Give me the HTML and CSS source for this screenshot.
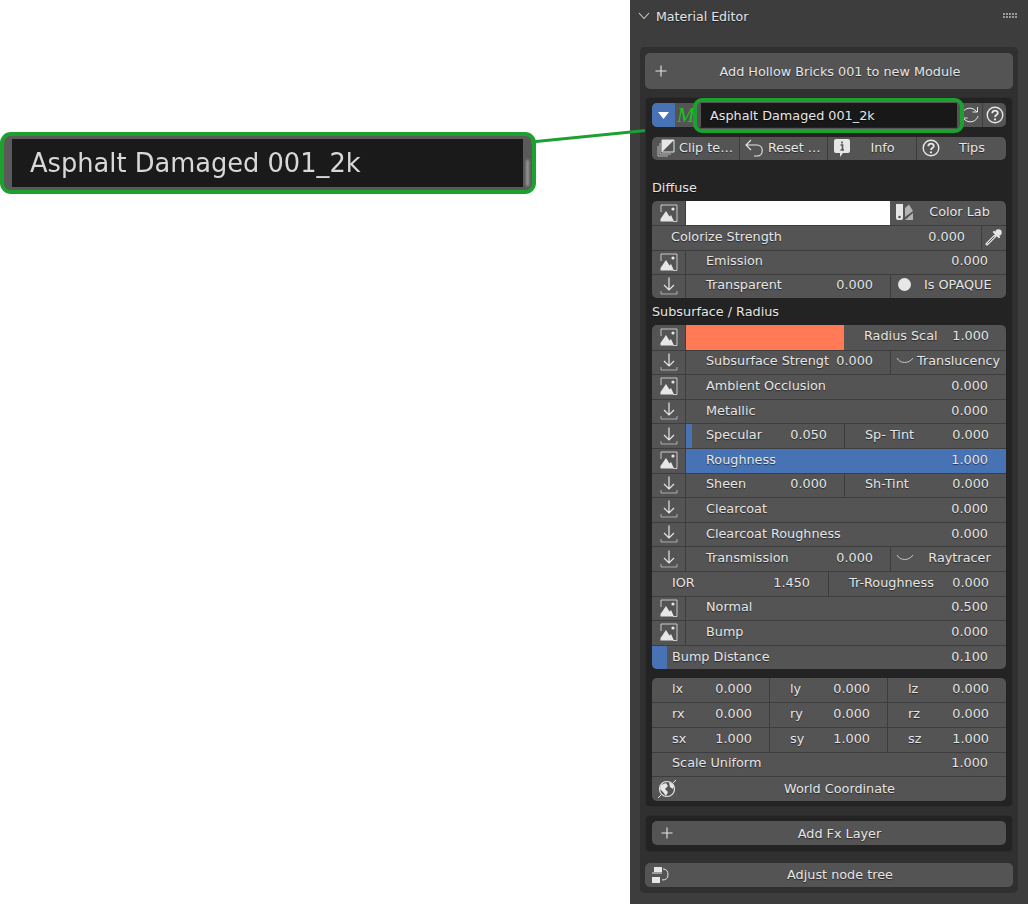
FILE: index.html
```html
<!DOCTYPE html>
<html>
<head>
<meta charset="utf-8">
<title>Material Editor</title>
<link rel="stylesheet" href="styles.css">
</head>
<body>

<svg class="defs" width="0" height="0">
	<symbol id="i-image" viewBox="0 0 18 18">
		<path d="M1 8V1H17V17.500H13" fill="none" stroke="currentColor" stroke-opacity=".8" stroke-width="1"/>
		<path d="M.5 17.500V15L6 7L9.500 12.500L11 11L14 17.500Z" fill="currentColor"/>
		<circle cx="13" cy="5" r="1.600" fill="currentColor"/>
	</symbol>
	<symbol id="i-down" viewBox="0 0 18 18">
		<path d="M9 .5V12.500M4 8L9 13L14 8" fill="none" stroke="currentColor" stroke-width="1.200"/>
		<path d="M1 14V17H17V14" fill="none" stroke="currentColor" stroke-opacity=".6" stroke-width="1"/>
	</symbol>
	<symbol id="i-plus" viewBox="0 0 12 12">
		<path d="M6 .5V11.500M.5 6H11.500" stroke="currentColor" stroke-width="1.100"/>
	</symbol>
	<symbol id="i-help" viewBox="0 0 18 18">
		<circle cx="9" cy="9" r="7.800" fill="none" stroke="currentColor" stroke-width="1.400"/>
		<path d="M6.300 7.200C6.300 3.800 11.800 3.800 11.800 7C11.800 9 9 9 9 11" fill="none" stroke="currentColor" stroke-width="1.800"/>
		<circle cx="9" cy="13.400" r="1.100" fill="currentColor"/>
	</symbol>
	<symbol id="i-arc" viewBox="0 0 18 8">
		<path d="M1 1C4 7 13 7 17 1" fill="none" stroke="currentColor" stroke-opacity=".75" stroke-width="1"/>
	</symbol>
</svg>

<div class="callout">
	<div class="callout-field">Asphalt Damaged 001_2k</div>
	<span class="callout-bit"></span>
</div>

<svg class="callout-line" width="170" height="30" viewBox="0 0 170 30">
	<path d="M0 24L170 7" stroke="#1ca02f" stroke-width="3"/>
</svg>

<aside class="panel">

	<header class="panel-head">
		<svg class="chevron" width="12" height="8" viewBox="0 0 12 8"><path d="M1 1L6 6.500L11 1" fill="none" stroke="currentColor" stroke-width="1.100"/></svg>
		<span>Material Editor</span>
		<span class="grip"></span>
	</header>

	<div class="panel-body">

		<button class="btn btn-add">
			<svg class="btn-icon" width="12" height="12"><use href="#i-plus"/></svg>
			<span>Add Hollow Bricks 001 to new Module</span>
		</button>

		<section class="box box-main">

			<div class="name-row">
				<span class="toggle"><svg width="11" height="7" viewBox="0 0 11 7"><path d="M0 0H11L5.500 7Z" fill="#fff"/></svg></span>
				<span class="script-m">M</span>
				<span class="name-field">Asphalt Damaged 001_2k</span>
				<span class="name-icon">
					<svg width="18" height="18" viewBox="0 0 18 18"><path d="M1 8C2 3 9 0 14 4L16 6M16.500 1V6H11.500M17 10C16 15 9 18 4 14L2 12M1.500 17V12H6.500" fill="none" stroke="currentColor" stroke-width="1"/></svg>
				</span>
				<span class="name-icon help"><svg width="18" height="18"><use href="#i-help"/></svg></span>
			</div>
			<div class="name-mark"></div>

			<div class="tools">
				<span class="tool t1">
					<svg width="18" height="18" viewBox="0 0 18 18"><path d="M5 1H17V13H5Z" fill="none" stroke="currentColor"/><path d="M5 13V1H17Z" fill="currentColor"/><path d="M3 4V15H14M1 7V17H11" fill="none" stroke="currentColor" stroke-opacity=".7"/></svg>
					<span>Clip te…</span>
				</span>
				<span class="tool t2">
					<svg width="19" height="18" viewBox="0 0 19 18"><path d="M6 1L1 6L6 11M1 6H12C19 6 19 17 12 17H9" fill="none" stroke="currentColor" stroke-width="1.100"/></svg>
					<span>Reset …</span>
				</span>
				<span class="tool tool-wide t3">
					<svg width="18" height="20" viewBox="0 0 18 20"><path d="M3 1H15Q17 1 17 3V13Q17 15 15 15H10L7 19V15H3Q1 15 1 13V3Q1 1 3 1Z" fill="currentColor"/><path d="M9 3.500V5.500M7.500 7H9.500V12M7.500 12H11" stroke="#545454" stroke-width="1.600" fill="none"/></svg>
					<span>Info</span>
				</span>
				<span class="tool tool-wide t4">
					<svg width="18" height="18"><use href="#i-help"/></svg>
					<span>Tips</span>
				</span>
			</div>

			<h4 class="sub-head first">Diffuse</h4>
			<div class="group group-short">
				<div class="row">
					<span class="ic"><svg width="18" height="18"><use href="#i-image"/></svg></span>
					<span class="swatch swatch-white"></span>
					<span class="cell cell-lab">
						<svg width="18" height="18" viewBox="0 0 18 18"><path d="M1 1H8V15Q8 17 6 17H3Q1 17 1 15Z" fill="currentColor"/><path d="M10 5L14 1.500L18 8L10 14Z M10 17L18 10V17Z" fill="currentColor" opacity=".65"/><circle cx="4.500" cy="14" r="1.300" fill="#545454"/></svg>
						<span>Color Lab</span>
					</span>
				</div>
				<div class="row">
					<span class="cell cell-full">
						<span>Colorize Strength</span><span>0.000</span>
					</span>
					<span class="ic ic-right">
						<svg width="18" height="18" viewBox="0 0 18 18"><path d="M2 16L10 8" stroke="currentColor" stroke-width="3" stroke-linecap="round"/><path d="M2.500 15.500L9.500 8.500" stroke="#545454" stroke-width="1"/><path d="M9 4L14 9" stroke="currentColor" stroke-width="2.200" stroke-linecap="round"/><circle cx="13.500" cy="4.500" r="3.200" fill="currentColor"/></svg>
					</span>
				</div>
				<div class="row">
					<span class="ic"><svg width="18" height="18"><use href="#i-image"/></svg></span>
					<span class="cell"><span>Emission</span><span>0.000</span></span>
				</div>
				<div class="row">
					<span class="ic"><svg width="18" height="18"><use href="#i-down"/></svg></span>
					<span class="cell w-204"><span>Transparent</span><span>0.000</span></span>
					<span class="cell cell-check">
						<svg width="13" height="13" viewBox="0 0 12 12"><circle cx="6" cy="6" r="6" fill="#e6e6e6"/></svg>
						<span>Is OPAQUE</span>
					</span>
				</div>
			</div>

			<h4 class="sub-head">Subsurface / Radius</h4>
			<div class="group">
				<div class="row">
					<span class="ic"><svg width="18" height="18"><use href="#i-image"/></svg></span>
					<span class="swatch swatch-coral"></span>
					<span class="cell w-162"><span>Radius Scal</span><span>1.000</span></span>
				</div>
				<div class="row">
					<span class="ic"><svg width="18" height="18"><use href="#i-down"/></svg></span>
					<span class="cell w-204"><span>Subsurface Strengt</span><span>0.000</span></span>
					<span class="cell cell-check arc">
						<svg width="18" height="8"><use href="#i-arc"/></svg>
						<span>Translucency</span>
					</span>
				</div>
				<div class="row">
					<span class="ic"><svg width="18" height="18"><use href="#i-image"/></svg></span>
					<span class="cell"><span>Ambient Occlusion</span><span>0.000</span></span>
				</div>
				<div class="row">
					<span class="ic"><svg width="18" height="18"><use href="#i-down"/></svg></span>
					<span class="cell"><span>Metallic</span><span>0.000</span></span>
				</div>
				<div class="row">
					<span class="ic"><svg width="18" height="18"><use href="#i-down"/></svg></span>
					<span class="cell fill w-158" style="--fill: 6px"><span>Specular</span><span>0.050</span></span>
					<span class="cell w-162"><span>Sp- Tint</span><span>0.000</span></span>
				</div>
				<div class="row">
					<span class="ic"><svg width="18" height="18"><use href="#i-image"/></svg></span>
					<span class="cell fill" style="--fill: 100%"><span>Roughness</span><span>1.000</span></span>
				</div>
				<div class="row">
					<span class="ic"><svg width="18" height="18"><use href="#i-down"/></svg></span>
					<span class="cell w-158"><span>Sheen</span><span>0.000</span></span>
					<span class="cell w-162"><span>Sh-Tint</span><span>0.000</span></span>
				</div>
				<div class="row">
					<span class="ic"><svg width="18" height="18"><use href="#i-down"/></svg></span>
					<span class="cell"><span>Clearcoat</span><span>0.000</span></span>
				</div>
				<div class="row">
					<span class="ic"><svg width="18" height="18"><use href="#i-down"/></svg></span>
					<span class="cell"><span>Clearcoat Roughness</span><span>0.000</span></span>
				</div>
				<div class="row">
					<span class="ic"><svg width="18" height="18"><use href="#i-down"/></svg></span>
					<span class="cell w-204"><span>Transmission</span><span>0.000</span></span>
					<span class="cell cell-check arc">
						<svg width="18" height="8"><use href="#i-arc"/></svg>
						<span class="grow">Raytracer</span>
					</span>
				</div>
				<div class="row">
					<span class="cell w-176"><span>IOR</span><span>1.450</span></span>
					<span class="cell"><span>Tr-Roughness</span><span>0.000</span></span>
				</div>
				<div class="row">
					<span class="ic"><svg width="18" height="18"><use href="#i-image"/></svg></span>
					<span class="cell"><span>Normal</span><span>0.500</span></span>
				</div>
				<div class="row">
					<span class="ic"><svg width="18" height="18"><use href="#i-image"/></svg></span>
					<span class="cell"><span>Bump</span><span>0.000</span></span>
				</div>
				<div class="row">
					<span class="cell fill" style="--fill: 15px"><span>Bump Distance</span><span>0.100</span></span>
				</div>
			</div>

			<div class="group coords">
				<div class="row">
					<span class="cell c1"><span>lx</span><span>0.000</span></span>
					<span class="cell c2"><span>ly</span><span>0.000</span></span>
					<span class="cell"><span>lz</span><span>0.000</span></span>
				</div>
				<div class="row">
					<span class="cell c1"><span>rx</span><span>0.000</span></span>
					<span class="cell c2"><span>ry</span><span>0.000</span></span>
					<span class="cell"><span>rz</span><span>0.000</span></span>
				</div>
				<div class="row">
					<span class="cell c1"><span>sx</span><span>1.000</span></span>
					<span class="cell c2"><span>sy</span><span>1.000</span></span>
					<span class="cell"><span>sz</span><span>1.000</span></span>
				</div>
				<div class="row">
					<span class="cell"><span>Scale Uniform</span><span>1.000</span></span>
				</div>
				<div class="row row-world">
					<svg width="20" height="20" viewBox="0 0 20 20"><circle cx="10" cy="10" r="7.500" fill="none" stroke="currentColor" stroke-width="1.200"/><path d="M4 6L9 4L11 7L8 10L11 13L9 17L6 13L3 10ZM12 3L17 6L16 10L13 8Z" fill="currentColor"/><path d="M1 19L4 16M16 4L19 1" stroke="currentColor"/></svg>
					<span>World Coordinate</span>
				</div>
			</div>
		</section>

		<section class="box box-fx">
			<button class="btn btn-row">
				<svg class="btn-icon" width="12" height="12"><use href="#i-plus"/></svg>
				<span>Add Fx Layer</span>
			</button>
		</section>

		<button class="btn btn-row btn-adjust">
			<svg class="btn-icon" width="18" height="18" viewBox="0 0 18 18"><path d="M3 1H11V6H3ZM1 11H9V17H1Z" fill="currentColor"/><path d="M1 7H11M12 3Q17 3 17 9Q17 14 11 14" fill="none" stroke="currentColor"/></svg>
			<span>Adjust node tree</span>
		</button>

	</div>
</aside>

</body>
</html>
```

FILE: styles.css
```css
* {
	box-sizing: border-box;
}

body {
	margin: 0;
	height: 904px;
	position: relative;
	overflow: hidden;
	display: flex;
	justify-content: flex-end;
	background-color: #fff;
	font-family: "DejaVu Sans", sans-serif;
	font-size: 12.8px;
	color: #e6e6e6;
}

.defs {
	position: absolute;
}

/* zoomed-in copy of the name field, on the white part */
.callout {
	position: absolute;
	left: 0;
	top: 132px;
	width: 536px;
	height: 62px;
	border: 4px solid #1ca02f;
	border-radius: 11px;
	background-color: #5a5a5a;
	padding: 3px 9px 3px 8px;
}

.callout-field {
	height: 100%;
	padding-left: 18px;
	display: flex;
	align-items: center;
	background-color: #1a1a1a;
	font-size: 25.700px;
	color: #d8d8d8;
	filter: blur(.7px);
}

.callout-bit {
	position: absolute;
	right: 3px;
	top: 24px;
	width: 3px;
	height: 26px;
	background-color: #999;
	filter: blur(1px);
}

.callout-line {
	position: absolute;
	left: 531px;
	top: 118px;
}

.panel {
	width: 398px;
	height: 904px;
	background-color: #3d3d3d;
	text-shadow: 0 1px 1px rgba(0,0,0,.55);
}

.panel-head {
	height: 47px;
	padding: 9px 10px 0 8px;
	display: flex;
	align-items: flex-start;
	font-size: 12.600px;
	line-height: 16px;
}

.chevron {
	margin: 3px 6px 0 0;
	color: #ccc;
}

.grip {
	margin: 4px 0 0 auto;
	width: 15px;
	height: 6px;
	background-image: radial-gradient(circle at 1px 1px, #999 1px, transparent 1px);
	background-size: 3px 3px;
}

.panel-body {
	margin: 0 10px;
	height: 846px;
	padding: 6px 5px 0 5px;
	background-color: #303030;
	border-radius: 5px;
}

.btn {
	width: 100%;
	border: 0;
	padding: 0;
	display: flex;
	align-items: center;
	background-color: #545454;
	border-radius: 5px;
	font: inherit;
	color: inherit;
	text-shadow: inherit;
}

.btn span {
	flex: 1;
	text-align: center;
}

.btn-add {
	height: 36px;
	padding-left: 10px;
}

.btn-row {
	height: 24px;
	padding-left: 9px;
}

.box {
	background-color: #232323;
	border: 1px solid #2c2c2c;
	border-radius: 5px;
	padding: 5px 6px;
}

.box-main {
	margin-top: 8px;
	height: 710px;
	position: relative;
}

.box-fx {
	margin-top: 8px;
	height: 37px;
}

.btn-adjust {
	margin-top: 11px;
	padding-left: 6px;
	padding-bottom: 1px;
}

.btn-adjust .btn-icon {
	margin-right: -2px;
	flex: none;
}

.name-row {
	height: 24px;
	display: flex;
	align-items: stretch;
	border-radius: 5px;
	overflow: hidden;
	background-color: #545454;
}

.toggle {
	width: 23px;
	display: flex;
	align-items: center;
	justify-content: center;
	background-color: #4772b3;
}

.script-m {
	width: 26px;
	padding-left: 2px;
	font-family: "Liberation Serif", serif;
	font-style: italic;
	font-size: 21px;
	line-height: 24px;
	color: #19c41f;
	text-shadow: none;
}

.name-field {
	width: 256px;
	padding-left: 9px;
	display: flex;
	align-items: center;
	background-color: #181818;
}

.name-icon {
	flex: 1;
	display: flex;
	align-items: center;
	justify-content: center;
}

.name-icon.help {
	flex: none;
	width: 24px;
	border-left: 1px solid #3d3d3d;
}

/* green highlight round the name field */
.name-mark {
	position: absolute;
	left: 47px;
	top: 0;
	width: 271px;
	height: 35px;
	border: 4px solid #1ca02f;
	border-radius: 9px;
	box-shadow: inset 0 0 0 1px #555;
}

.tools {
	margin-top: 10px;
	height: 23px;
	display: flex;
	background-color: #545454;
	border-radius: 5px;
	overflow: hidden;
}

.tool {
	flex: none;
	padding: 0 0 2px 5px;
	display: flex;
	align-items: center;
	gap: 4px;
	border-left: 1px solid #3d3d3d;
	white-space: nowrap;
}

.tool:first-child {
	border-left: 0;
}

.t1 {
	width: 87px;
}

.t2 {
	width: 88px;
}

.t3 {
	width: 89px;
}

.t4 {
	width: 90px;
}

.tool-wide span {
	flex: 1;
	text-align: center;
	padding-right: 6px;
}

.sub-head {
	height: 27px;
	margin: 0;
	display: flex;
	align-items: center;
	font-weight: normal;
	font-size: 12.800px;
}

.sub-head.first {
	margin-top: 14px;
}

.group {
	background-color: #545454;
	border-radius: 5px;
	overflow: hidden;
}

.coords {
	margin-top: 8.500px;
}

.row {
	height: 24.600px;
	display: flex;
	border-top: 1px solid #3d3d3d;
}

.row:first-child {
	border-top: 0;
}

.group-short .row {
	height: 24.250px;
}

.ic {
	flex: none;
	width: 34px;
	padding-bottom: 1px;
	display: flex;
	align-items: center;
	justify-content: center;
	border-right: 1px solid #3d3d3d;
}

.ic-right {
	width: 25px;
	border-right: 0;
	border-left: 1px solid #3d3d3d;
}

.swatch {
	display: block;
}

.swatch-white {
	width: 204px;
	background-color: #fff;
}

.swatch-coral {
	width: 158px;
	background-color: #ff7a55;
}

.cell {
	flex: 1;
	min-width: 0;
	padding: 0 17px 3px 20px;
	display: flex;
	align-items: center;
	justify-content: space-between;
	border-left: 1px solid #3d3d3d;
	white-space: nowrap;
}

.cell:first-child, .ic + .cell, .swatch + .cell {
	border-left: 0;
}

.ic + .cell:last-child, .cell:only-child {
	padding-right: 18px;
}

.cell-full {
	padding-left: 19px;
	padding-right: 16px;
}

.w-204 {
	flex: none;
	width: 204px;
}

.w-158 {
	flex: none;
	width: 158px;
}

.w-162 {
	flex: none;
	width: 162px;
}

.w-176 {
	flex: none;
	width: 176px;
	padding-right: 18px;
}

.c1 {
	flex: none;
	width: 117px;
}

.c2 {
	flex: none;
	width: 118px;
}

.cell-lab {
	padding-right: 10px;
	padding-left: 5px;
}

.cell-lab span {
	flex: 1;
	text-align: center;
	padding-left: 10px;
}

.cell-check {
	padding-right: 4px;
	padding-left: 7px;
	justify-content: flex-start;
	gap: 13px;
}

.cell-check.arc {
	padding-left: 5px;
	gap: 3px;
}

.grow {
	flex: 1;
	text-align: center;
}

.fill {
	background: linear-gradient(#4772b3, #4772b3) no-repeat;
	background-size: var(--fill) 100%;
}

.row-world {
	padding-left: 5px;
	align-items: center;
}

.row-world span {
	flex: 1;
	text-align: center;
	padding-right: 4px;
}
```
